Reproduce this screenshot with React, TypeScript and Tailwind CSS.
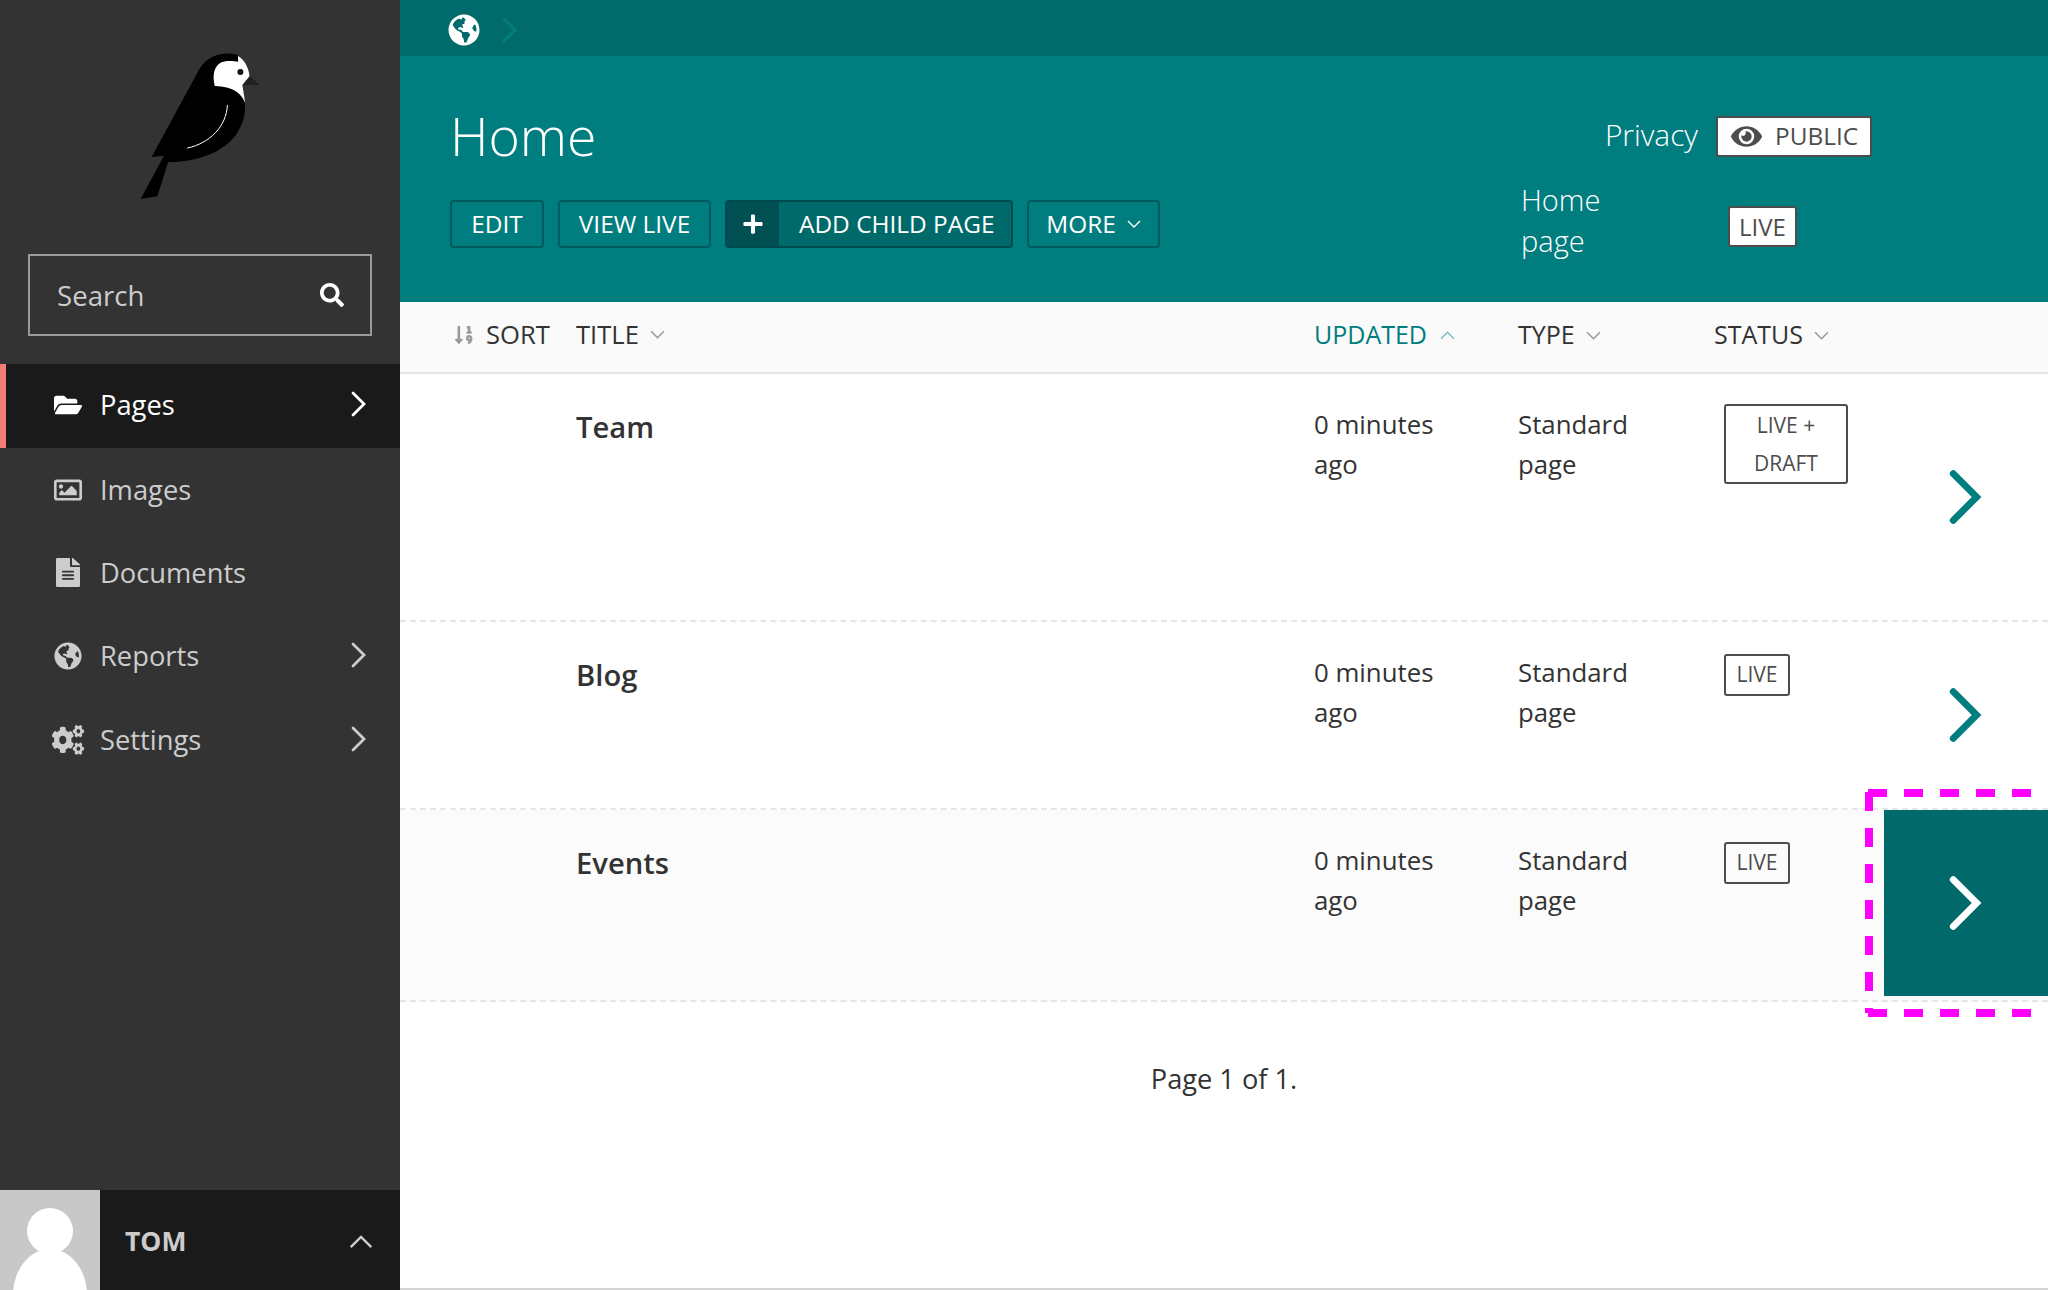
import { FaCogs, FaEye, FaFileAlt, FaFolderOpen, FaGlobeAmericas, FaPlus, FaRegImage, FaSearch, FaSortNumericDown } from 'react-icons/fa'

function Chevron({ className, weight = 2.8 }: { className?: string; weight?: number }) {
  return (
    <svg viewBox="0 0 16 26" className={className} fill="none" stroke="currentColor" strokeLinecap="round" strokeLinejoin="miter">
      <path d="M2 2 L13 13 L2 24" strokeWidth={weight} />
    </svg>
  )
}

function SmallChevron({ up, className }: { up?: boolean; className?: string }) {
  return (
    <svg viewBox="0 0 14 8" className={className} fill="none" stroke="currentColor" strokeWidth="1.4">
      <path d={up ? 'M1 7 L7 1 L13 7' : 'M1 1 L7 7 L13 1'} />
    </svg>
  )
}

function WagtailLogo() {
  return (
    <svg viewBox="420 150 370 460" className="h-[153px] w-[123px]">
      <path d="M422 598 L472 590 L505 487 C600 488 690 450 720 385 C745 340 735 300 730 285 L715 165 C680 155 630 160 600 205 L455 472 L492 468 Z" fill="#000" />
      <path d="M715 168 C735 180 748 205 750 232 L728 256 C730 270 735 295 736 308 C725 280 700 260 645 258 C638 230 640 200 665 187 C685 180 705 185 715 185 Z" fill="#fff" />
      <circle cx="722" cy="216" r="9" fill="#111" />
      <path d="M750 228 L780 255 L728 255 Z" fill="#231f20" />
      <path d="M683 315 C680 380 630 430 562 445" fill="none" stroke="#fff" strokeWidth="3" />
    </svg>
  )
}

const navItems = [
  { label: 'Pages', icon: <FaFolderOpen className="h-[28px] w-[28px]" />, active: true, arrow: true, rowClass: 'h-[84px]' },
  { label: 'Images', icon: <FaRegImage className="h-[28px] w-[28px]" />, arrow: false, rowClass: 'h-[83px]' },
  { label: 'Documents', icon: <FaFileAlt className="h-[29px] w-[24px]" preserveAspectRatio="none" />, arrow: false, rowClass: 'h-[83px]' },
  { label: 'Reports', icon: <FaGlobeAmericas className="h-[28px] w-[28px]" />, arrow: true, rowClass: 'h-[84px]' },
  { label: 'Settings', icon: <FaCogs className="h-[30px] w-[33px]" preserveAspectRatio="none" />, arrow: true, rowClass: 'h-[83px]' },
]

function Sidebar() {
  return (
    <aside className="flex h-full w-[400px] shrink-0 flex-col bg-[#333333]">
      <div className="flex justify-center pl-[2px] pt-[50px]">
        <WagtailLogo />
      </div>
      <div className="mx-[28px] mt-[51px] flex h-[82px] items-center justify-between border-2 border-[#999999] pl-[27px] pr-[26px]">
        <span className="pt-[2px] text-[27.6px] text-[#cccccc]">Search</span>
        <FaSearch className="h-[24px] w-[24px] text-white" />
      </div>
      <nav className="mt-[28px]">
        {navItems.map((item) => (
          <div
            key={item.label}
            className={
              item.active
                ? `flex ${item.rowClass} items-center border-l-[6px] border-[#f37e77] bg-[#1a1a1a] pb-[2px] pl-[46px] pr-[33px] text-white`
                : `flex ${item.rowClass} items-center pl-[52px] pr-[33px] text-[#cccccc]`
            }
          >
            <span className="flex w-[48px] justify-center pr-[16px]">{item.icon}</span>
            <span className="text-[27.3px] leading-none">{item.label}</span>
            {item.arrow && <Chevron className="ml-auto mb-[2px] h-[26px] w-[16px]" />}
          </div>
        ))}
      </nav>
      <div className="mt-auto flex h-[100px] items-center bg-[#1a1a1a]">
        <svg viewBox="0 0 100 100" className="h-[100px] w-[100px]">
          <rect width="100" height="100" fill="#c8c8c8" />
          <circle cx="50" cy="41" r="23" fill="#fff" />
          <ellipse cx="50" cy="105" rx="37" ry="46" fill="#fff" />
        </svg>
        <span className="ml-[25px] pt-[3px] text-[26.5px] font-bold text-[#cccccc]">TOM</span>
        <SmallChevron up className="ml-auto mr-[27px] mt-[3px] h-[14px] w-[24px] text-[#cccccc]" />
      </div>
    </aside>
  )
}

function ActionButton({ children, width }: { children: React.ReactNode; width: string }) {
  return (
    <div className={`flex h-[48px] ${width} items-center justify-center rounded-[4px] border-2 border-[#005b5e] text-[24.4px] text-white`}>
      {children}
    </div>
  )
}

function Header() {
  return (
    <>
      <div className="flex h-[56px] items-center gap-[22px] bg-[#016a6b] pl-[48px] pt-[4px]">
        <FaGlobeAmericas className="h-[32px] w-[32px] text-white" />
        <Chevron className="h-[26px] w-[16px] text-[#007d7e]" weight={3} />
      </div>
      <header className="flex h-[246px] justify-between bg-[#007d7e] pl-[50px]">
        <div>
          <h1 className="mt-[48px] text-[53.5px] font-light leading-[64px] text-white">Home</h1>
          <div className="mt-[32px] flex gap-[14px]">
            <ActionButton width="w-[94px]">EDIT</ActionButton>
            <ActionButton width="w-[153px]">VIEW LIVE</ActionButton>
            <div className="flex h-[48px] w-[288px] items-center overflow-hidden rounded-[4px] border-2 border-[#004a4d] bg-[#006a6b] text-[24.4px] text-white">
              <span className="flex h-full w-[52px] items-center justify-center bg-[#004f52]">
                <FaPlus className="h-[22px] w-[22px]" />
              </span>
              <span className="pl-[20px]">ADD CHILD PAGE</span>
            </div>
            <ActionButton width="w-[133px]">
              MORE
              <SmallChevron className="ml-[11px] h-[8px] w-[14px]" />
            </ActionButton>
          </div>
        </div>
        <div className="mr-[176px] w-[351px] text-[29px] text-white">
          <div className="mt-[60px] flex items-center justify-end gap-[18px]">
            <span className="pb-[4px] text-[29.8px] font-light leading-[37px]">Privacy</span>
            <div className="flex h-[41px] w-[156px] items-center gap-[13px] rounded-[3px] border-2 border-[#4d4d4d] bg-white pl-[13px] text-[24.4px] text-[#4d4d4d]">
              <FaEye className="h-[29px] w-[31px]" />
              PUBLIC
            </div>
          </div>
          <div className="mt-[22px] flex items-start">
            <div className="w-[207px] font-light leading-[41px]">Home<br />page</div>
            <div className="mt-[27px] flex h-[41px] items-center rounded-[3px] border-2 border-[#4d4d4d] bg-white px-[9px] text-[24px] text-[#4d4d4d]">LIVE</div>
          </div>
        </div>
      </header>
    </>
  )
}

const gridCols = 'grid grid-cols-[176px_738px_204px_206px_160px_164px]'

function ColumnHead({ label, active, className }: { label: string; active?: boolean; className?: string }) {
  return (
    <div className={`flex items-center ${active ? 'text-[#007d7e]' : 'text-[#333333]'} ${className ?? ''}`}>
      {label}
      <SmallChevron up={active} className={active ? 'ml-[13px] h-[9px] w-[15px] text-[#7cbdbe]' : 'ml-[11px] h-[9px] w-[15px] text-[#999999]'} />
    </div>
  )
}

function FocusRing() {
  // dashes restart at the corner on each side, as in the browser's focus outline
  return (
    <svg className="pointer-events-none absolute left-[-19px] top-[-21px] h-[228px] w-[183px]" viewBox="0 0 183 228" fill="none" stroke="#ff00ff" strokeWidth="8" strokeDasharray="19 17">
      <path d="M4 3 V224 M3 4 H183 M3 224 H183" />
    </svg>
  )
}

const rows = [
  { title: 'Team', status: 'LIVE + DRAFT', height: 'h-[248px]', hover: false },
  { title: 'Blog', status: 'LIVE', height: 'h-[188px]', hover: false },
  { title: 'Events', status: 'LIVE', height: 'h-[192px]', hover: true },
]

function PageRow({ title, status, height, hover }: { title: string; status: string; height: string; hover: boolean }) {
  return (
    <div className={`${gridCols} ${height} border-b-2 border-dashed border-[#e6e6e6] ${hover ? 'bg-[#fbfbfb]' : 'bg-white'}`}>
      <div />
      <div className="pt-[31px] text-[29.2px] font-semibold leading-[44px] text-[#333333]">{title}</div>
      <div className="pt-[30px] text-[25.8px] leading-[40px] text-[#333333]">0 minutes<br />ago</div>
      <div className="pt-[30px] text-[25.8px] leading-[40px] text-[#333333]">Standard<br />page</div>
      <div className={status === 'LIVE' ? 'pt-[32px]' : 'pt-[30px]'}>
        {status === 'LIVE' ? (
          <span className="flex h-[42px] w-[66px] items-center justify-center rounded-[3px] border-2 border-[#4d4d4d] text-[21px] text-[#4d4d4d]">LIVE</span>
        ) : (
          <span className="block h-[80px] w-[124px] rounded-[3px] border-2 border-[#4d4d4d] text-center text-[21px] leading-[38px] text-[#4d4d4d]">LIVE +<br />DRAFT</span>
        )}
      </div>
      <div className={hover ? 'relative mb-[4px] flex items-center justify-center bg-[#01696a] text-white' : 'flex items-center justify-center text-[#007d7e]'}>
        <Chevron className="h-[56px] w-[34px]" weight={3.2} />
        {hover && <FocusRing />}
      </div>
    </div>
  )
}

export default function App() {
  return (
    <div className="flex h-[1290px] w-[2048px] overflow-hidden bg-white font-['Open_Sans',sans-serif]">
      <Sidebar />
      <main className="flex h-full min-w-0 flex-1 flex-col overflow-hidden border-b-2 border-[#d5d5d5]">
        <Header />
        <div className={`${gridCols} h-[72px] items-center border-b-2 border-[#e6e6e6] bg-[#fafafa] pb-[4px] text-[25px]`}>
          <div className="flex items-center pl-[55px] text-[25.6px] text-[#333333]">
            <FaSortNumericDown className="mr-[13px] h-[22px] w-[18px] text-[#999999]" />
            SORT
          </div>
          <ColumnHead label="TITLE" className="text-[25.6px]" />
          <ColumnHead label="UPDATED" active />
          <ColumnHead label="TYPE" />
          <ColumnHead label="STATUS" className="-ml-[10px]" />
        </div>
        {rows.map((row) => (
          <PageRow key={row.title} {...row} />
        ))}
        <p className="mt-[56px] text-center text-[27.2px] leading-[41px] text-[#333333]">Page 1 of 1.</p>
      </main>
    </div>
  )
}
